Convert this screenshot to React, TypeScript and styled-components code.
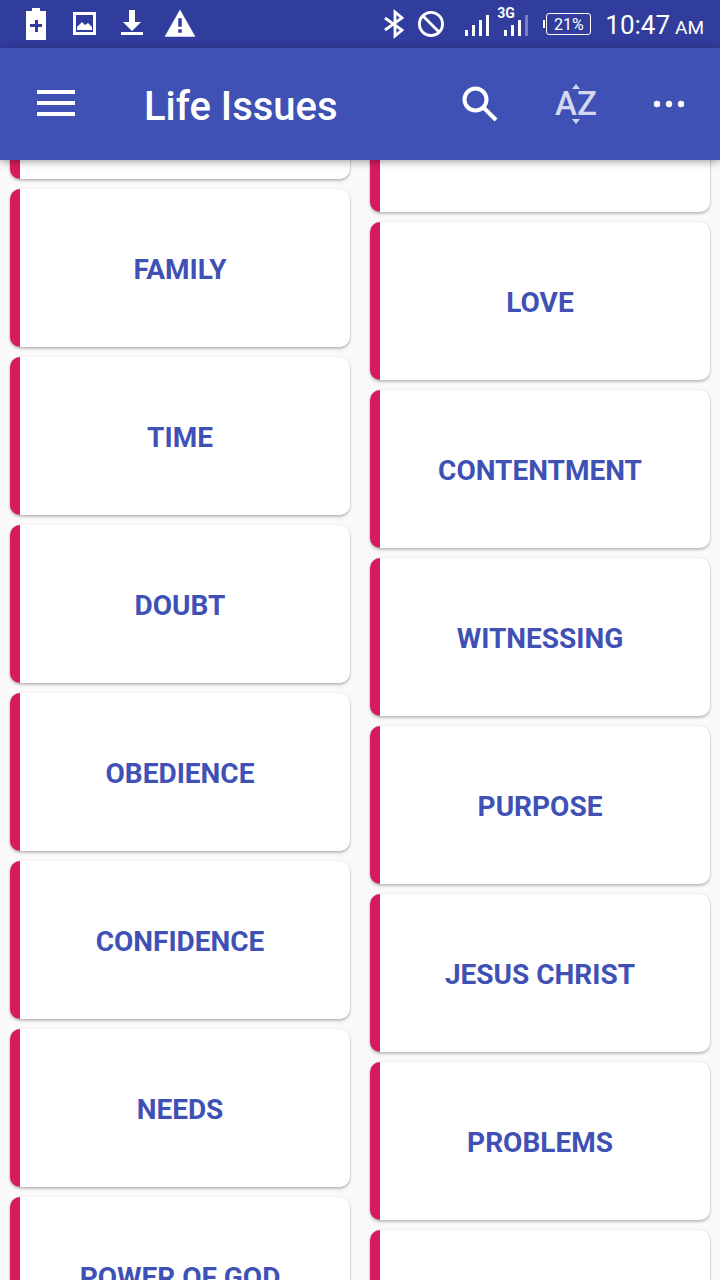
import React from "react";
import styled, { createGlobalStyle } from "styled-components";

const GlobalStyle = createGlobalStyle`
  *, *::before, *::after { box-sizing: border-box; }
  html, body { margin: 0; padding: 0; background: #fafafa; }
  body { font-family: Roboto, "Noto Sans", sans-serif; overflow: hidden; }
  button { font: inherit; border: 0; padding: 0; margin: 0; cursor: pointer; }
`;

const Screen = styled.div`
  display: flex;
  flex-direction: column;
  height: 100vh;
  background: #fafafa;
`;

const StatusBar = styled.div`
  display: flex;
  flex: none;
  align-items: center;
  justify-content: space-between;
  height: 48px;
  padding: 0 16px 0 20px;
  background: #303d9d;
  color: #fff;
`;

const Notifications = styled.div`
  display: flex;
  gap: 16px;
`;

const SystemStatus = styled.div`
  display: flex;
  align-items: center;
`;

const StatusIcon = styled.svg`
  display: block;
  width: 32px;
  height: 48px;
  fill: #fff;
`;

const RadioIcons = styled.svg`
  display: block;
  width: 64px;
  height: 48px;
  margin-right: 18px;
`;

const Signal = styled.div`
  position: relative;
  width: 64px;
  height: 48px;
  margin-right: 14px;

  svg { display: block; }
`;

const NetworkType = styled.span`
  position: absolute;
  left: 32px;
  top: 5px;
  font-size: 14px;
  line-height: 16px;
  font-weight: 700;
`;

const Battery = styled.div`
  display: flex;
  align-items: center;
  margin-right: 14px;

  &::before {
    content: "";
    width: 2px;
    height: 8px;
    margin-right: 1px;
    background: #fff;
  }
`;

const BatteryLevel = styled.span`
  width: 45px;
  height: 22px;
  border: 1px solid #fff;
  border-radius: 3px;
  font-size: 16px;
  line-height: 21px;
  text-align: center;
`;

const Clock = styled.time`
  padding-top: 4px;
  font-size: 26px;
  line-height: 32px;
  white-space: nowrap;
`;

const Meridiem = styled.span`
  margin-left: 5px;
  font-size: 19px;
`;

const AppBar = styled.header`
  position: relative;
  z-index: 1;
  display: flex;
  flex: none;
  align-items: center;
  height: 112px;
  padding: 0 6px 0 8px;
  background: #3f51b5;
  color: #fff;
  box-shadow: 0 2px 8px rgba(0, 0, 0, 0.36);
`;

const IconButton = styled.button<{ $narrow?: boolean }>`
  display: flex;
  align-items: center;
  justify-content: center;
  width: ${(p) => (p.$narrow ? 90 : 96)}px;
  height: 96px;
  background: none;
  color: #fff;
`;

const Title = styled.h1`
  flex: 1;
  margin: 0;
  padding: 6px 0 0 40px;
  font-size: 40px;
  line-height: 48px;
  font-weight: 500;
`;

const SortIcon = styled.span`
  display: flex;
  flex-direction: column;
  align-items: center;
  color: #d4d8f0;
  font-size: 33px;
  line-height: 28px;
  font-weight: 500;

  svg { display: block; fill: currentColor; }
`;

const TopicList = styled.main`
  display: flex;
  flex: 1;
  align-items: flex-start;
  gap: 20px;
  min-height: 0;
  padding: 0 10px;
  overflow: hidden;
`;

const Column = styled.div<{ $scrolled: number }>`
  display: flex;
  flex: 1;
  flex-direction: column;
  gap: 10px;
  margin-top: -${(p) => p.$scrolled}px;
`;

const TopicCard = styled.button`
  display: flex;
  align-items: center;
  justify-content: center;
  height: 158px;
  padding: 4px 10px 0 0;
  border-left: 10px solid #d81b60;
  border-radius: 10px;
  background: #fff;
  box-shadow: 0 2px 3px rgba(0, 0, 0, 0.24), 0 0 2px rgba(0, 0, 0, 0.14);
  overflow: hidden;
  color: #3f51b5;
`;

const TopicName = styled.span`
  font-size: 28px;
  line-height: 32px;
  font-weight: 700;
`;

const leftTopics = ["", "FAMILY", "TIME", "DOUBT", "OBEDIENCE", "CONFIDENCE", "NEEDS", "POWER OF GOD"];
const rightTopics = ["", "LOVE", "CONTENTMENT", "WITNESSING", "PURPOSE", "JESUS CHRIST", "PROBLEMS", ""];

function Topics({ names, scrolled }: { names: string[]; scrolled: number }) {
  return (
    <Column $scrolled={scrolled}>
      {names.map((name, i) => (
        <TopicCard key={i} type="button">
          <TopicName>{name}</TopicName>
        </TopicCard>
      ))}
    </Column>
  );
}

export default function App() {
  return (
    <>
      <GlobalStyle />
      <Screen>
        <StatusBar>
          <Notifications>
            <StatusIcon viewBox="0 0 32 48" aria-hidden="true">
              <path fillRule="evenodd" d="M12 8h8v3h6v29H6V11h6zM15 20v4h-5v3h5v5h3v-5h4v-3h-4v-4z" />
            </StatusIcon>
            <StatusIcon viewBox="0 0 32 48" aria-hidden="true">
              <path fillRule="evenodd" d="M5 12h23v23H5zM8 15v17h17V15z" />
              <path d="M9 30v-3l5-5 3 3 3-2 4 4v3z" />
            </StatusIcon>
            <StatusIcon viewBox="0 0 32 48" aria-hidden="true">
              <path d="M13 10h6v12h6l-9 9-9-9h6zM5 32h22v3H5z" />
            </StatusIcon>
            <StatusIcon viewBox="0 0 32 48" aria-hidden="true">
              <path fillRule="evenodd" d="M16 10l15 26.500H1zM14 18v9h4v-9zM14 29v4h4v-4z" stroke="#fff" strokeWidth="0.500" />
            </StatusIcon>
          </Notifications>
          <SystemStatus>
            <RadioIcons viewBox="384 0 64 48" fill="none" stroke="#fff" strokeWidth="2.800" aria-hidden="true">
              <path d="M386 18l17 12-7 6V12l7 6-17 12" />
              <circle cx="432" cy="24" r="11.600" />
              <path d="M424 16l16 16" />
            </RadioIcons>
            <Signal>
              <svg width="64" height="48" viewBox="466 0 64 48" fill="#fff" aria-hidden="true">
                <path d="M466 30h3v6h-3zM473 25h3v11h-3zM480 20h3v16h-3zM487 15h3v21h-3zM505 30h3v6h-3zM512 25h3v11h-3zM519 20h3v16h-3z" />
                <path d="M526 15h3v21h-3z" opacity="0.350" />
              </svg>
              <NetworkType>3G</NetworkType>
            </Signal>
            <Battery>
              <BatteryLevel>21%</BatteryLevel>
            </Battery>
            <Clock dateTime="10:47">
              10:47<Meridiem>AM</Meridiem>
            </Clock>
          </SystemStatus>
        </StatusBar>
        <AppBar>
          <IconButton type="button" aria-label="Open menu">
            <svg width="38" height="30" viewBox="0 0 38 30" fill="currentColor">
              <path d="M0 1h38v4H0zM0 12h38v4H0zM0 23h38v4H0z" />
            </svg>
          </IconButton>
          <Title>Life Issues</Title>
          <IconButton type="button" aria-label="Search">
            <svg width="36" height="36" viewBox="0 0 36 36" fill="none" stroke="currentColor">
              <circle cx="13.500" cy="13.500" r="11" strokeWidth="4" />
              <path d="M22 22l12 12" strokeWidth="4" />
            </svg>
          </IconButton>
          <IconButton type="button" aria-label="Sort alphabetically">
            <SortIcon>
              <svg width="10" height="6" viewBox="0 0 10 6"><path d="M1 5l4-5 4 5z" /></svg>
              <span>AZ</span>
              <svg width="10" height="6" viewBox="0 0 10 6"><path d="M1 1l4 5 4-5z" /></svg>
            </SortIcon>
          </IconButton>
          <IconButton type="button" $narrow aria-label="More options">
            <svg width="32" height="8" viewBox="0 0 32 8" fill="currentColor">
              <circle cx="4" cy="4" r="3.200" />
              <circle cx="16" cy="4" r="3.200" />
              <circle cx="28" cy="4" r="3.200" />
            </svg>
          </IconButton>
        </AppBar>
        <TopicList>
          <Topics names={leftTopics} scrolled={139} />
          <Topics names={rightTopics} scrolled={106} />
        </TopicList>
      </Screen>
    </>
  );
}
